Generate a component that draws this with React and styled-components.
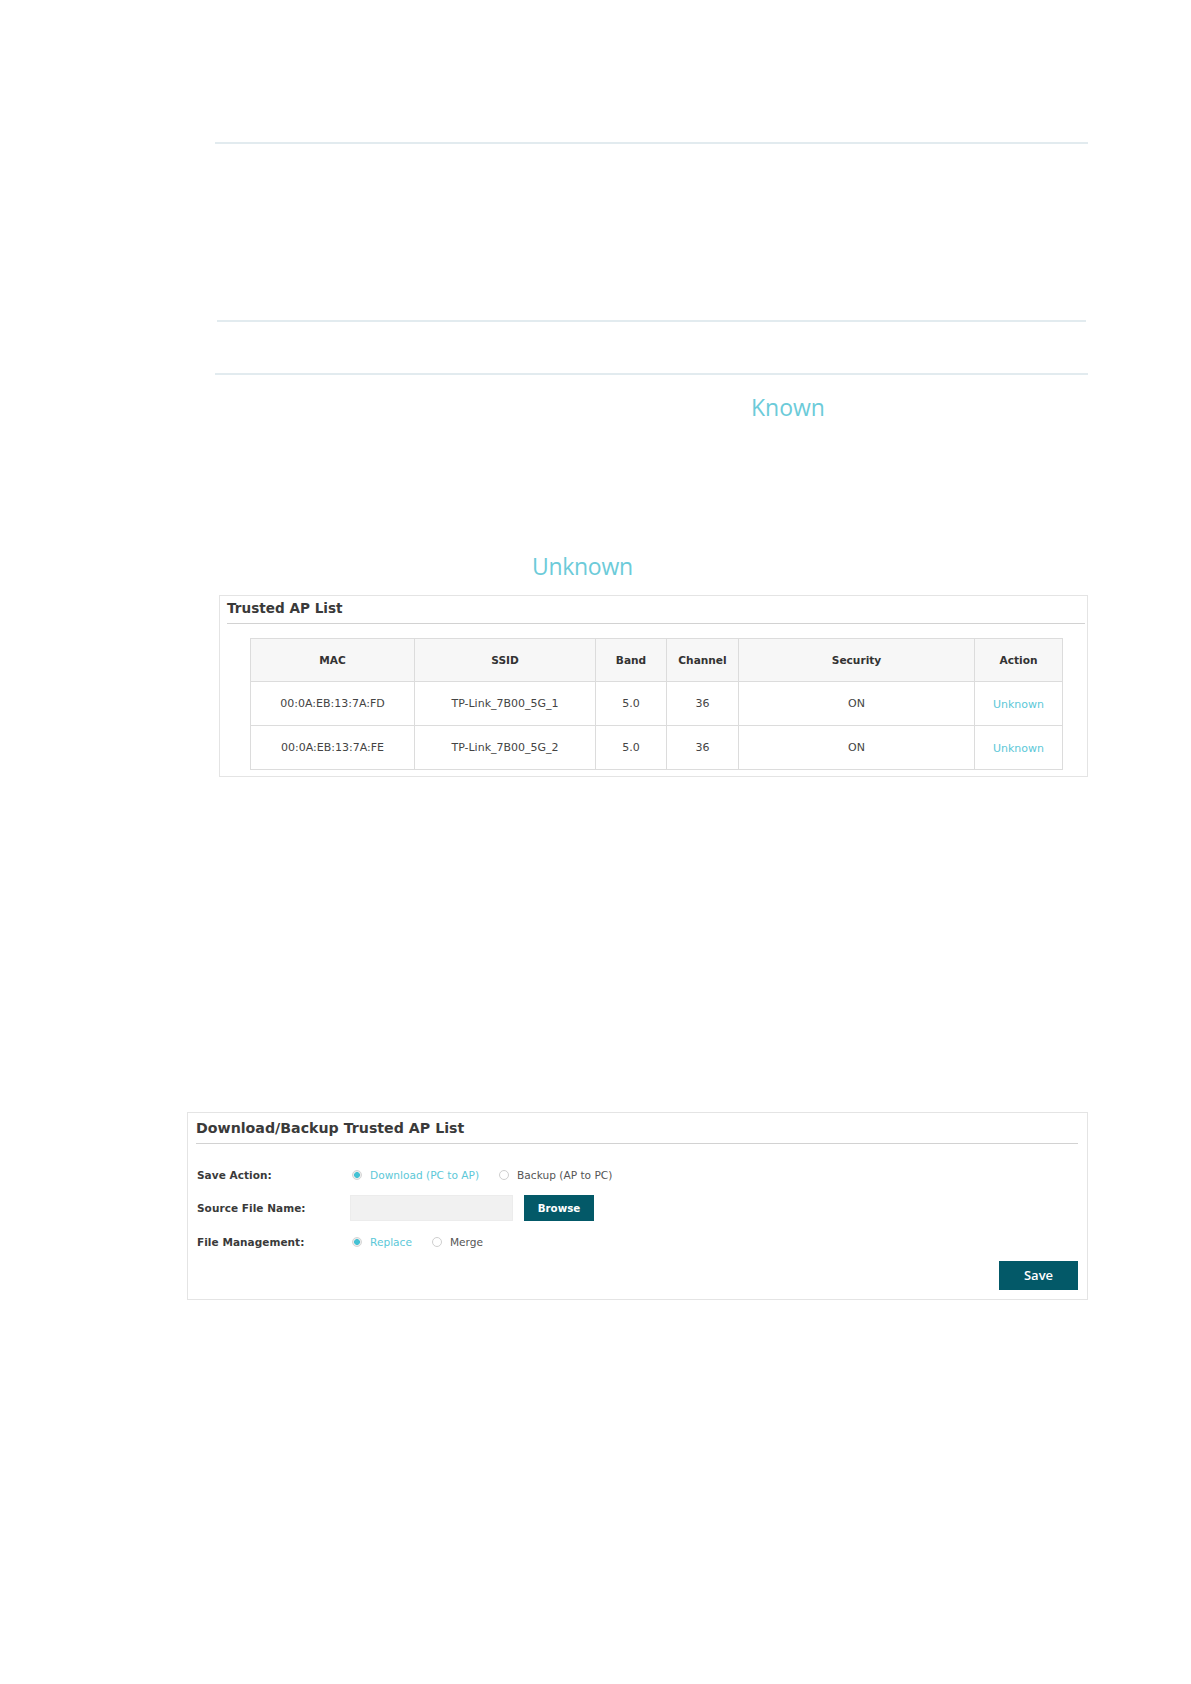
import React from "react";
import styled, { createGlobalStyle } from "styled-components";

const Global = createGlobalStyle`
  html, body { margin: 0; padding: 0; background: #ffffff; }
  body { font-family: "DejaVu Sans", Verdana, sans-serif; color: #333; }
  * { box-sizing: border-box; }
`;

const Page = styled.main`
  display: flex;
  flex-direction: column;
  align-items: flex-start;
  padding: 142px 0 380px;
  min-height: 1684px;
`;

const Rule = styled.div`
  height: 2px;
  background: #e2ebef;
  margin-left: ${(p) => p.$left}px;
  margin-top: ${(p) => p.$top || 0}px;
  width: ${(p) => p.$width}px;
`;

const Term = styled.div`
  font-family: "Open Sans", "Noto Sans", sans-serif;
  font-size: 23px;
  line-height: 23px;
  color: #6ccbd9;
  margin-top: ${(p) => p.$top}px;
  margin-left: ${(p) => p.$left}px;
  letter-spacing: ${(p) => p.$ls || 0}px;
`;

const Panel = styled.section`
  border: 1px solid #e4e4e4;
  background: #fff;
  margin-left: ${(p) => p.$left}px;
  margin-top: ${(p) => p.$top}px;
  width: ${(p) => p.$width}px;
`;

const PanelHead = styled.h2`
  margin: 0 ${(p) => p.$mr}px 0 ${(p) => p.$ml}px;
  padding: ${(p) => p.$pt}px 0 ${(p) => p.$pb}px;
  border-bottom: 1px solid #d2d2d2;
  font-family: "DejaVu Sans", Verdana, sans-serif;
  font-weight: bold;
  font-size: ${(p) => p.$size}px;
  line-height: 16px;
  color: #3a3a3a;
`;

const Grid = styled.div`
  display: grid;
  grid-template-columns: 164px 181px 71px 72px 236px 88px;
  width: 813px;
  margin: 14px 0 6px 30px;
  border-top: 1px solid #dcdcdc;
  border-left: 1px solid #dcdcdc;
`;

const Cell = styled.div`
  display: flex;
  align-items: center;
  justify-content: center;
  height: ${(p) => (p.$head ? 43 : 44)}px;
  border-right: 1px solid #dcdcdc;
  border-bottom: 1px solid #dcdcdc;
  background: ${(p) => (p.$head ? "#f7f7f7" : "#ffffff")};
  font-size: ${(p) => (p.$head ? 10.6 : 11)}px;
  font-weight: ${(p) => (p.$head ? "bold" : "normal")};
  color: ${(p) => (p.$link ? "#5cc8d8" : p.$head ? "#333" : "#444")};
  padding-top: ${(p) => (p.$link ? 2 : 0)}px;
`;

const Form = styled.div`
  display: flex;
  flex-direction: column;
  gap: 7.5px;
  margin-top: 17.5px;
  padding-left: 9px;
`;

const Row = styled.div`
  display: flex;
  align-items: center;
  height: 26px;
`;

const Label = styled.div`
  width: 153px;
  font-size: 10.5px;
  font-weight: bold;
  letter-spacing: 0.05px;
  color: #3a3a3a;
`;

const Options = styled.div`
  display: flex;
  align-items: center;
  gap: 20px;
  padding-left: 2px;
`;

const Option = styled.label`
  display: flex;
  align-items: center;
  gap: 8px;
  font-size: 10.6px;
  color: ${(p) => (p.$on ? "#5cc8d8" : "#555")};
`;

const Radio = styled.span`
  width: 10px;
  height: 10px;
  border-radius: 50%;
  border: 1px solid ${(p) => (p.$on ? "#d6d6d6" : "#cfcfcf")};
  background: ${(p) =>
    p.$on
      ? "radial-gradient(circle, #45c2d4 0 2.6px, #ececec 3.2px)"
      : "#ffffff"};
  flex: none;
`;

const FileInput = styled.div`
  width: 163px;
  height: 26px;
  background: #f1f1f1;
  border: 1px solid #ececec;
`;

const Button = styled.button`
  display: flex;
  align-items: center;
  justify-content: center;
  border: none;
  background: #035968;
  color: #ffffff;
  padding: 0;
  cursor: pointer;
  width: ${(p) => p.$w}px;
  height: ${(p) => p.$h}px;
  margin-left: ${(p) => p.$ml || 0}px;
  font-family: ${(p) =>
    p.$big ? '"Open Sans", "Noto Sans", sans-serif' : '"DejaVu Sans", Verdana, sans-serif'};
  font-size: ${(p) => (p.$big ? 13 : 10.3)}px;
  font-weight: ${(p) => (p.$big ? 600 : "bold")};
`;

const Actions = styled.div`
  display: flex;
  justify-content: flex-end;
  margin-top: 6px;
  padding: 0 9px 9px 0;
`;

const head = ["MAC", "SSID", "Band", "Channel", "Security", "Action"];
const rows = [
  ["00:0A:EB:13:7A:FD", "TP-Link_7B00_5G_1", "5.0", "36", "ON", "Unknown"],
  ["00:0A:EB:13:7A:FE", "TP-Link_7B00_5G_2", "5.0", "36", "ON", "Unknown"],
];

export default function App() {
  return (
    <>
      <Global />
      <Page>
        <Rule $left={215} $width={873} />
        <Rule $left={217} $width={869} $top={176} />
        <Rule $left={215} $width={873} $top={51} />
        <Term $left={751} $top={21}>Known</Term>
        <Term $left={532} $top={136} $ls={-0.3}>Unknown</Term>

        <Panel $left={219} $top={17} $width={869}>
          <PanelHead $ml={7} $mr={2} $pt={4} $pb={7} $size={13.6}>
            Trusted AP List
          </PanelHead>
          <Grid>
            {head.map((h) => (
              <Cell key={h} $head>
                {h}
              </Cell>
            ))}
            {rows.map((r, i) =>
              r.map((c, j) => (
                <Cell key={`${i}-${j}`} $link={j === 5}>
                  {c}
                </Cell>
              ))
            )}
          </Grid>
        </Panel>

        <Panel $left={187} $top={335} $width={901}>
          <PanelHead $ml={8} $mr={9} $pt={7} $pb={7} $size={14.2}>
            Download/Backup Trusted AP List
          </PanelHead>
          <Form>
            <Row>
              <Label>Save Action:</Label>
              <Options>
                <Option $on>
                  <Radio $on />
                  Download (PC to AP)
                </Option>
                <Option>
                  <Radio />
                  Backup (AP to PC)
                </Option>
              </Options>
            </Row>
            <Row>
              <Label>Source File Name:</Label>
              <FileInput />
              <Button $w={70} $h={26} $ml={11}>
                Browse
              </Button>
            </Row>
            <Row>
              <Label>File Management:</Label>
              <Options>
                <Option $on>
                  <Radio $on />
                  Replace
                </Option>
                <Option>
                  <Radio />
                  Merge
                </Option>
              </Options>
            </Row>
          </Form>
          <Actions>
            <Button $w={79} $h={29} $big>
              Save
            </Button>
          </Actions>
        </Panel>
      </Page>
    </>
  );
}
